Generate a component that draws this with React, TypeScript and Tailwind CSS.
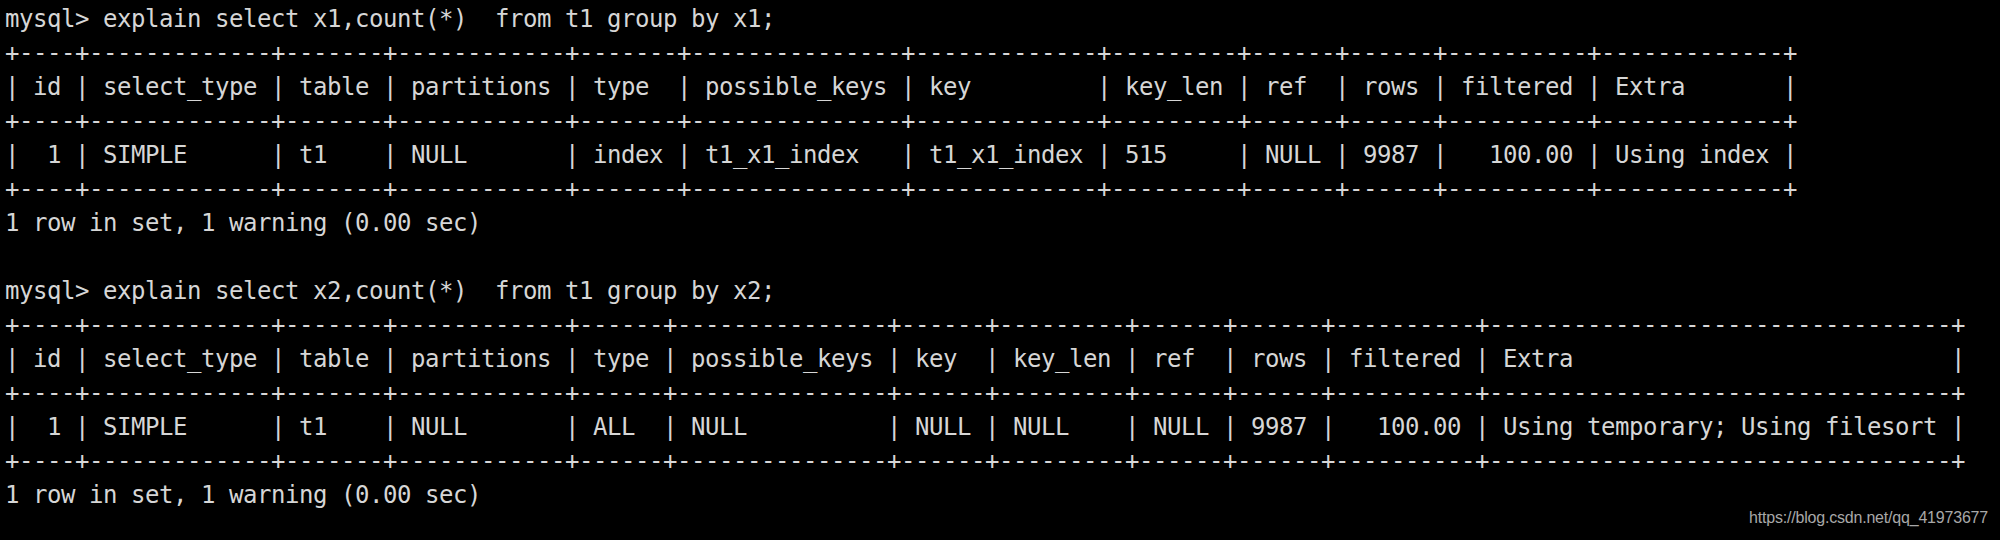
import React from "react";

function table(headers: string[], row: string[], rightAlign: boolean[]): string[] {
  const widths = headers.map((h, i) => Math.max(h.length, row[i].length));
  const border = "+" + widths.map((w) => "-".repeat(w + 2)).join("+") + "+";
  const fmt = (cells: string[], align: boolean) =>
    "|" +
    cells
      .map((c, i) => " " + (align && rightAlign[i] ? c.padStart(widths[i]) : c.padEnd(widths[i])) + " ")
      .join("|") +
    "|";
  return [border, fmt(headers, false), border, fmt(row, true), border];
}

const headers = ["id", "select_type", "table", "partitions", "type", "possible_keys", "key", "key_len", "ref", "rows", "filtered", "Extra"];
const ra = [true, false, false, false, false, false, false, false, false, true, true, false];

const lines: string[] = [
  "mysql> explain select x1,count(*)  from t1 group by x1;",
  ...table(headers, ["1", "SIMPLE", "t1", "NULL", "index", "t1_x1_index", "t1_x1_index", "515", "NULL", "9987", "100.00", "Using index"], ra),
  "1 row in set, 1 warning (0.00 sec)",
  "",
  "mysql> explain select x2,count(*)  from t1 group by x2;",
  ...table(headers, ["1", "SIMPLE", "t1", "NULL", "ALL", "NULL", "NULL", "NULL", "NULL", "9987", "100.00", "Using temporary; Using filesort"], ra),
  "1 row in set, 1 warning (0.00 sec)",
];

export default function App() {
  return (
    <div className="relative w-[2000px] h-[540px] bg-black overflow-hidden">
      <div
        className="pl-[5px] pt-[2px] text-[#d6d6d6] text-[24px] leading-[34px] tracking-[-0.45px] whitespace-pre"
        style={{ fontFamily: '"DejaVu Sans Mono", monospace' }}
      >
        {lines.map((l, i) => (
          <div key={i} className="h-[34px]">{l}</div>
        ))}
      </div>
      <div
        className="absolute right-[12px] bottom-[10px] text-[16px] text-[#a8a8a8] tracking-[-0.2px]"
        style={{ fontFamily: '"Liberation Sans", Arial, sans-serif' }}
      >
        https://blog.csdn.net/qq_41973677
      </div>
    </div>
  );
}
